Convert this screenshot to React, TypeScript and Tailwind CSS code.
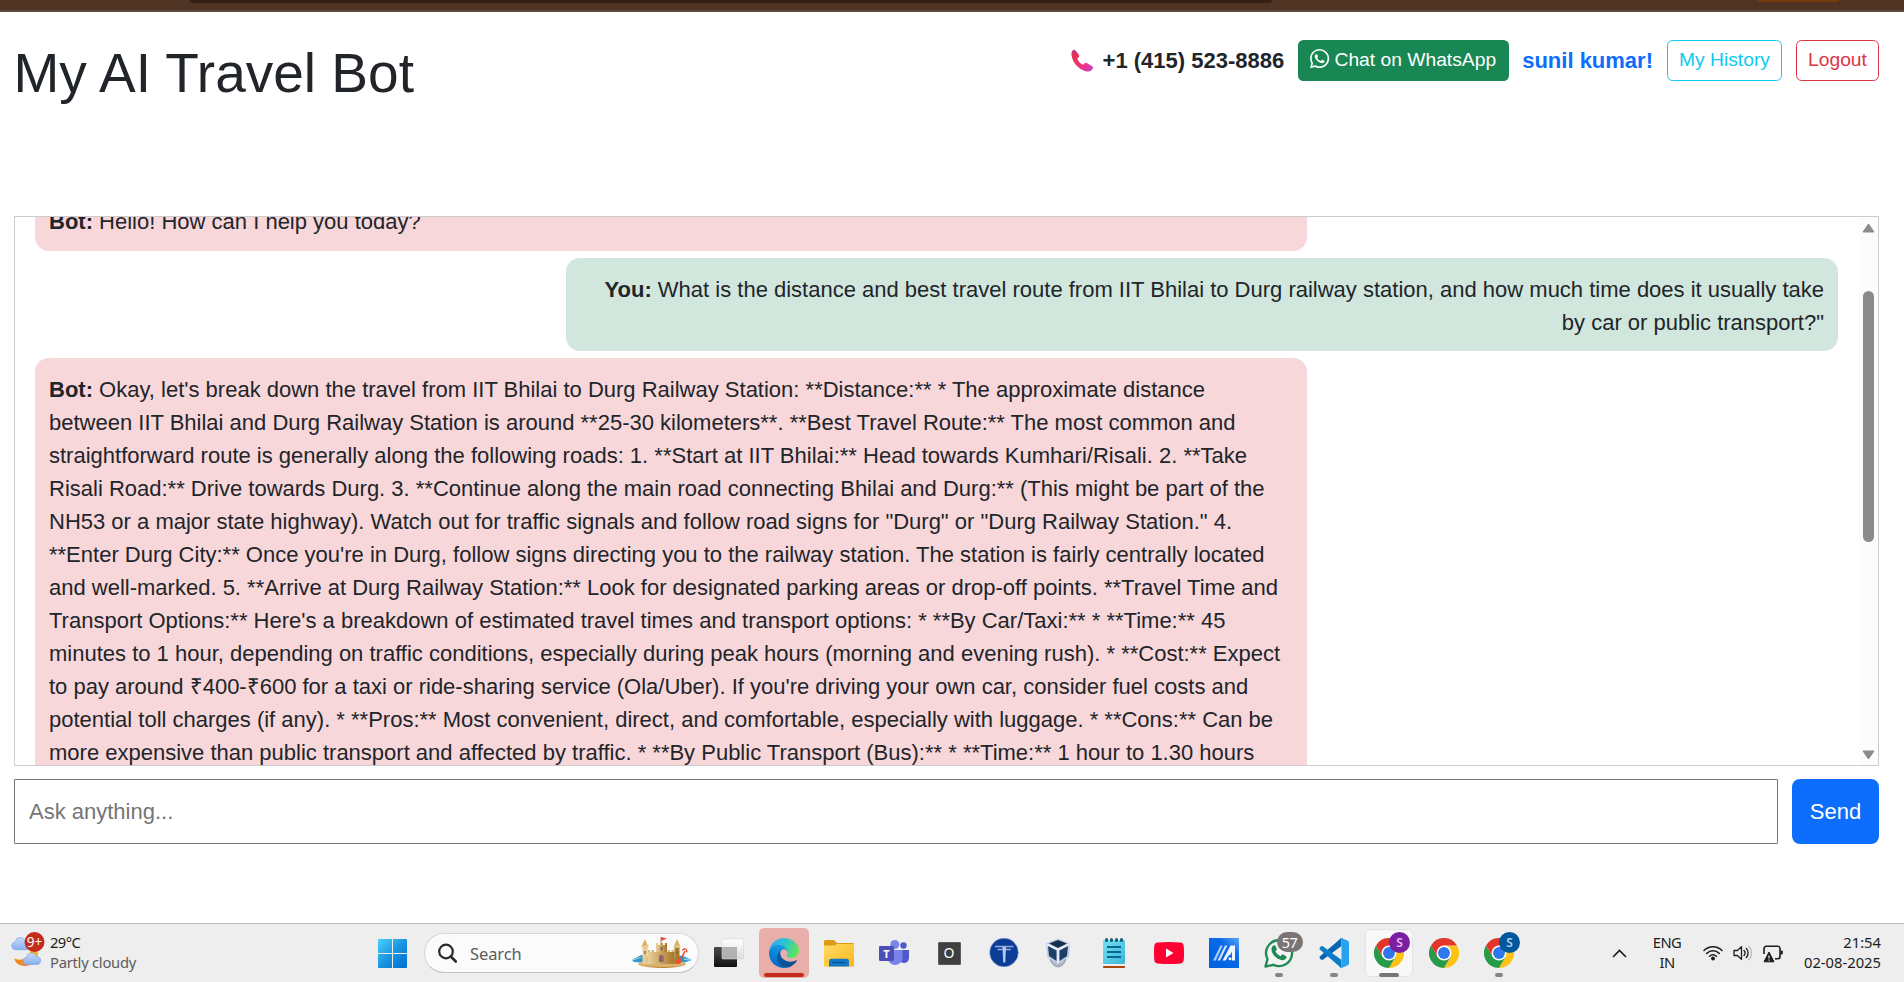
import React from "react";
import { BsWhatsapp } from "react-icons/bs";

const BOT_REPLY =
  "Okay, let's break down the travel from IIT Bhilai to Durg Railway Station: **Distance:** * The approximate distance between IIT Bhilai and Durg Railway Station is around **25-30 kilometers**. **Best Travel Route:** The most common and straightforward route is generally along the following roads: 1. **Start at IIT Bhilai:** Head towards Kumhari/Risali. 2. **Take Risali Road:** Drive towards Durg. 3. **Continue along the main road connecting Bhilai and Durg:** (This might be part of the NH53 or a major state highway). Watch out for traffic signals and follow road signs for \"Durg\" or \"Durg Railway Station.\" 4. **Enter Durg City:** Once you're in Durg, follow signs directing you to the railway station. The station is fairly centrally located and well-marked. 5. **Arrive at Durg Railway Station:** Look for designated parking areas or drop-off points. **Travel Time and Transport Options:** Here's a breakdown of estimated travel times and transport options: * **By Car/Taxi:** * **Time:** 45 minutes to 1 hour, depending on traffic conditions, especially during peak hours (morning and evening rush). * **Cost:** Expect to pay around ₹400-₹600 for a taxi or ride-sharing service (Ola/Uber). If you're driving your own car, consider fuel costs and potential toll charges (if any). * **Pros:** Most convenient, direct, and comfortable, especially with luggage. * **Cons:** Can be more expensive than public transport and affected by traffic. * **By Public Transport (Bus):** * **Time:** 1 hour to 1.30 hours";

function PhoneIcon() {
  return (
    <svg width="23" height="23" viewBox="0 0 23 23" className="mr-[9px] shrink-0">
      <defs>
        <linearGradient id="ph" x1="0" y1="0" x2="1" y2="1">
          <stop offset="0" stopColor="#b0409a" />
          <stop offset=".22" stopColor="#e8304f" />
          <stop offset=".65" stopColor="#f0328a" />
          <stop offset="1" stopColor="#b849c4" />
        </linearGradient>
      </defs>
      <path
        d="M1.6 1.4C2.6.4 3.8.5 4.6 1.5l3.2 4.3c.7 1 .6 1.900-.3 2.700l-1.200 1c.8 2.700 3 5 5.800 6.300l1.300-1.300c.8-.8 1.700-.9 2.700-.3l5 3c1 .7 1.200 1.700.5 2.700-1.400 2.200-4 3-7 2.300C7.500 20.600 1.500 13.500.600 6.500.300 4.300.500 2.500 1.600 1.400z"
        fill="url(#ph)"
      />
    </svg>
  );
}

function WeatherIcon() {
  return (
    <svg width="36" height="36" viewBox="0 0 36 36">
      <defs>
        <linearGradient id="moon" x1="0" y1="1" x2="1" y2="0">
          <stop offset="0" stopColor="#ee7a1c" />
          <stop offset="1" stopColor="#f9b928" />
        </linearGradient>
        <linearGradient id="cl" x1="0" y1="0" x2="0" y2="1">
          <stop offset="0" stopColor="#c9dcfa" />
          <stop offset="1" stopColor="#86aef0" />
        </linearGradient>
      </defs>
      <path d="M5 17.800a4 4 0 0 1 .2-7.900 5 5 0 0 1 9.800-.6 4.300 4.300 0 0 1 2 8.500z" fill="url(#cl)" stroke="#7fa4e2" strokeWidth=".7" />
      <path d="M20.500 18.500h7.500c.6 8.500-4.500 14.700-12 15.400C9.500 34.400 5.500 31 4 26.500c5.500 2.500 15 1.500 16.500-8z" fill="url(#moon)" />
      <path d="M16.500 32.500a3.500 3.500 0 0 1 0-7 5 5 0 0 1 9.800-.8 3.500 3.500 0 0 1 4.200 4.200c-.2 2.400-1.500 3.600-3.500 3.600z" fill="url(#cl)" stroke="#7fa4e2" strokeWidth=".7" />
      <circle cx="24.500" cy="10" r="10" fill="#c42b1c" />
      <text x="24.500" y="14.600" textAnchor="middle" fontSize="13.500" fill="#fff" fontFamily="Noto Sans, sans-serif">9+</text>
    </svg>
  );
}

function WindowsIcon() {
  return (
    <svg width="29" height="29" viewBox="0 0 29 29">
      <defs>
        <linearGradient id="win" gradientUnits="userSpaceOnUse" x1="0" y1="0" x2="29" y2="29">
          <stop offset="0" stopColor="#4cd2ff" />
          <stop offset=".5" stopColor="#1a94e0" />
          <stop offset="1" stopColor="#006fd0" />
        </linearGradient>
      </defs>
      <path d="M1 0h13v14H0V1a1 1 0 0 1 1-1zM15 0h13a1 1 0 0 1 1 1v13H15zM0 15h14v14H1a1 1 0 0 1-1-1zM15 15h14v13a1 1 0 0 1-1 1H15z" fill="url(#win)" />
    </svg>
  );
}

function CastleIcon() {
  return (
    <svg width="60" height="32" viewBox="0 0 60 32">
      <defs>
        <linearGradient id="sand" x1="0" y1="0" x2="1" y2="0">
          <stop offset="0" stopColor="#ecd09a" />
          <stop offset="1" stopColor="#a87624" />
        </linearGradient>
      </defs>
      <path d="M0 23l9-5 8 2v6L2 25zM43 18l8 1 9 4-9 3-9-1z" fill="#2f95cd" />
      <path d="M1 23l8-3M52 22l7 1" stroke="#86d2e8" strokeWidth="1.300" />
      <ellipse cx="30" cy="27" rx="24" ry="4" fill="#dcb271" />
      <path d="M10 28q20 4 41 0-19 6-41 0z" fill="#b88332" />
      <path d="M10.500 10h5v17h-5zM42.500 10h5v17h-5z" fill="url(#sand)" />
      <path d="M9.800 9L12.900 2 16 9zM42 9l3.100-7L48.200 9z" fill="#d9b06a" />
      <path d="M9.500 8.500h7v2.300h-7zM41.500 8.500h7v2.300h-7z" fill="#e7c98d" />
      <path d="M24 6h2v2h2V6h3v2h2V6h2v21H24z" fill="url(#sand)" />
      <path d="M15.500 15h27v12h-27z" fill="url(#sand)" />
      <path d="M16 13h2v2h-2zM19.500 13H22v2h-2.500zM35.500 13H38v2h-2.500zM39.500 13H42v2h-2.500z" fill="#dcb873" />
      <path d="M27 25v-5a2.300 2.300 0 0 1 4.600 0v5z" fill="#8d6670" />
      <path d="M28.500 10h2v3.500h-2zM12.300 14h1.300v3h-1.300zM44.500 14h1.300v3h-1.300z" fill="#806071" />
      <path d="M29 6V0" stroke="#9c6b42" strokeWidth=".8" />
      <path d="M29 0l6 1.500-3 1.200L29 4z" fill="#f04a32" />
      <path d="M53 14l-4.500 9" stroke="#e9492c" strokeWidth="1.600" />
      <path d="M50.500 13.500a2.200 2.200 0 1 1 4 1.800" stroke="#e9492c" strokeWidth="1.400" fill="none" />
      <path d="M45 21.500l5 1.500-1.500 3.500-5.500-.5z" fill="#f0502f" />
    </svg>
  );
}

function TaskViewIcon() {
  return (
    <svg width="30" height="30" viewBox="0 0 30 30">
      <defs>
        <linearGradient id="tv" x1="0" y1="0" x2="0" y2="1">
          <stop offset="0" stopColor="#4b4b4b" />
          <stop offset="1" stopColor="#101010" />
        </linearGradient>
        <linearGradient id="tw" x1="0" y1="0" x2="0" y2="1">
          <stop offset="0" stopColor="#fff" />
          <stop offset="1" stopColor="#dcdcdc" />
        </linearGradient>
      </defs>
      <rect x="0" y="9" width="23" height="20" rx="1" fill="url(#tv)" />
      <rect x="8" y="1" width="22" height="20" rx="1" fill="url(#tw)" />
      <path d="M8 9h15v12H8z" fill="#a4a4a4" opacity=".8" />
      <rect x="8" y="1" width="21.500" height="20" rx="1" fill="none" stroke="#d5d5d5" strokeWidth=".6" />
    </svg>
  );
}

function EdgeIcon() {
  return (
    <svg width="30" height="30" viewBox="0 0 256 256">
      <defs>
        <linearGradient id="e1" x1="0" y1="0" x2="1" y2="0">
          <stop offset="0" stopColor="#0c59a4" />
          <stop offset="1" stopColor="#114a8b" />
        </linearGradient>
        <linearGradient id="e2" x1=".6" y1="0" x2=".3" y2="1">
          <stop offset="0" stopColor="#1b9de2" />
          <stop offset=".5" stopColor="#0883d9" />
          <stop offset="1" stopColor="#0667c5" />
        </linearGradient>
        <linearGradient id="e3" x1="0" y1=".3" x2="1" y2=".6">
          <stop offset="0" stopColor="#35a8ef" />
          <stop offset=".45" stopColor="#2bc3d2" />
          <stop offset="1" stopColor="#66e551" />
        </linearGradient>
      </defs>
      <path fill="url(#e1)" d="M231 190.500c-3.400 1.800-6.900 3.400-10.500 4.700a101 101 0 0 1-35.900 6.500c-47.300 0-88.500-32.500-88.500-74.300 0-11.400 6.400-21.900 16.600-27.300-42.800 1.800-53.800 46.400-53.800 72.500 0 73.900 68.100 81.400 82.800 81.400 7.900 0 19.800-2.300 27-4.600l1.300-.4a128.300 128.300 0 0 0 66.600-52.800 4 4 0 0 0-5.600-5.700z" />
      <path fill="url(#e2)" d="M105.700 241.400a79.200 79.200 0 0 1-22.700-21.300 80.700 80.700 0 0 1 29.500-120c3.200-1.500 8.500-4.100 15.600-4a32.400 32.400 0 0 1 25.700 13 32 32 0 0 1 6.300 18.700c0-.2 24.500-79.600-80-79.600-43.900 0-80 41.700-80 78.200 0 19.300 4 38.500 12 56a128 128 0 0 0 156.400 67.100 75.500 75.500 0 0 1-62.800-8.100z" />
      <path fill="url(#e3)" d="M152.300 148.900c-.8 1-3.300 2.500-3.300 5.700 0 2.600 1.700 5.100 4.700 7.200 14.400 10 41.500 8.700 41.600 8.700a59.600 59.600 0 0 0 30.300-8.400A61.400 61.400 0 0 0 256 109.300c.3-22.400-8-37.300-11.300-43.900C223.500 23.900 177.700 0 128 0A128 128 0 0 0 0 126.200c.5-36.500 36.800-66 80-66 3.500 0 23.500.3 42 10 16.300 8.600 24.900 19 30.800 29.200 6.200 10.700 7.300 24.100 7.300 29.500 0 5.300-2.700 13.300-7.800 20z" />
    </svg>
  );
}

function FolderIcon() {
  return (
    <svg width="30" height="30" viewBox="0 0 30 30">
      <defs>
        <linearGradient id="fo" x1="0" y1="0" x2="1" y2="1">
          <stop offset="0" stopColor="#ffdc6c" />
          <stop offset="1" stopColor="#fab614" />
        </linearGradient>
      </defs>
      <path d="M0 3.500A1.500 1.500 0 0 1 1.500 2H10l3 3h16a1 1 0 0 1 1 1v3H0z" fill="#dc9b10" />
      <path d="M0 7.500h10.500L13 6h17v22.500H0z" fill="url(#fo)" />
      <path d="M5 28.500V23a2.300 2.300 0 0 1 2.300-2.300h15.400A2.300 2.300 0 0 1 25 23v5.500z" fill="#1277c9" />
      <path d="M8.500 24.500h13" stroke="#074c8c" strokeWidth="1.200" />
    </svg>
  );
}

function TeamsIcon() {
  return (
    <svg width="30" height="30" viewBox="0 0 30 30">
      <circle cx="24.500" cy="7.500" r="3.200" fill="#5059c9" />
      <path d="M20 12h10v8a5 5 0 0 1-8 4z" fill="#5059c9" />
      <circle cx="15.800" cy="6.500" r="4.500" fill="#7b83eb" />
      <path d="M9 12h14.500v8a7.300 7.300 0 0 1-14.500 1z" fill="#7b83eb" />
      <rect x="0" y="8" width="15" height="15" rx="1.200" fill="#4a50b5" />
      <text x="7.500" y="19.500" textAnchor="middle" fontSize="11" fontWeight="700" fill="#fff" fontFamily="Noto Sans, sans-serif">T</text>
    </svg>
  );
}

function RoundTIcon() {
  return (
    <svg width="30" height="30" viewBox="0 0 30 30">
      <circle cx="15" cy="14.500" r="14.300" fill="#0b3c96" stroke="#81a1d5" strokeWidth=".6" />
      <path d="M6 8.500h18.500M8.500 11.500H22" stroke="#8faada" strokeWidth="1.700" fill="none" />
      <path d="M13.500 9h3.500l-.7 15.500h-2.100z" fill="#b7c9e8" />
    </svg>
  );
}

function CubeIcon() {
  return (
    <svg width="30" height="30" viewBox="0 0 30 30">
      <path d="M6 21q2 7 8 8 6-1 8-8z" fill="#b4bbca" stroke="#75809a" strokeWidth=".7" />
      <path d="M14 .5L26 5.500 25 19 14 26 3 19 2 5.500z" fill="#c3cfe5" />
      <path d="M14 2l9 3.500L14 10 5 5.500z" fill="#14304f" />
      <path d="M4 8l8.500 4.500V23L5 18zM24 8l-8.500 4.500V23L23 18z" fill="#1d3f66" />
      <path d="M14 11v14M3 6.500l11 5 11-5" stroke="#eff4fb" strokeWidth="1.500" fill="none" />
    </svg>
  );
}

function NotepadIcon() {
  return (
    <svg width="22" height="30" viewBox="0 0 22 30">
      <defs>
        <linearGradient id="np" x1="0" y1="0" x2="1" y2="1">
          <stop offset="0" stopColor="#75dff2" />
          <stop offset="1" stopColor="#3cb7d7" />
        </linearGradient>
      </defs>
      <path d="M0 27h22v2a1 1 0 0 1-1 1H1a1 1 0 0 1-1-1z" fill="#a8480d" />
      <path d="M0 25h22v3H0z" fill="#f2efed" />
      <rect x="0" y="2" width="22" height="24" rx="1" fill="url(#np)" />
      <path d="M4 9h14M4 14h14M4 19h14" stroke="#08678f" strokeWidth="1.900" />
      <path d="M3.500 1.500v1M8.500 1.500v1M13.500 1.500v1M18.500 1.500v1" stroke="#155e78" strokeWidth="3" strokeLinecap="round" />
    </svg>
  );
}

function YoutubeIcon() {
  return (
    <svg width="30" height="22" viewBox="0 0 30 22">
      <path d="M3.500.6Q15-.5 26.500.6 29.300 1 29.700 4q.7 7 0 14-.4 3-3.200 3.400-11.500 1.100-23 0Q.7 21 .3 18q-.7-7 0-14Q.7 1 3.500.6z" fill="#ff0033" />
      <path d="M12 6.500v9l7.500-4.500z" fill="#fff" />
    </svg>
  );
}

function AsusIcon() {
  return (
    <svg width="30" height="30" viewBox="0 0 30 30">
      <defs>
        <linearGradient id="as" x1="1" y1="0" x2=".2" y2=".9">
          <stop offset="0" stopColor="#60a6f5" />
          <stop offset=".4" stopColor="#0b6ae6" />
          <stop offset="1" stopColor="#0062e0" />
        </linearGradient>
      </defs>
      <rect width="30" height="30" fill="url(#as)" />
      <path d="M4 22.500L11.500 7.500h2.300L6.800 22.500z" fill="#a4cbfa" />
      <path d="M8.500 22.500L16 7.500h2.300l-7.300 15z" fill="#d3e6fd" />
      <path d="M13.500 22.500L21.500 7.500H26v15h-3v-9l-1.500 3-2 1.300-2.800 4.700z" fill="#eef6ff" />
      <circle cx="21" cy="20.800" r="1.500" fill="#fff" />
    </svg>
  );
}

function WhatsappTaskIcon() {
  return (
    <svg width="30" height="30" viewBox="0 0 30 30" fill="none">
      <path d="M1.500 28.500l2-7.500A13 13 0 1 1 9.500 26.800z" stroke="#1f8a55" strokeWidth="2.400" strokeLinejoin="round" fill="#f3f4f3" />
      <path d="M9 7.800c1-1 2.200-.7 2.700.4l1 2.600c.3.900-.3 1.500-1.300 2.700 1.300 2.300 2.900 3.700 5.200 4.700 1-1.300 1.600-2 2.500-1.600l2.700 1.400c1 .6.9 1.700.2 2.600-1.500 1.900-4 2-6.800.7C10.500 19 7.800 15.500 7.500 12c-.1-1.700.4-3.200 1.500-4.200z" fill="#1f8a55" />
    </svg>
  );
}

function VscodeIcon() {
  return (
    <svg width="30" height="30" viewBox="0 0 30 30">
      <path d="M1 20.500q1.500 2.200 3.200 1L22.500 8V.5q-1 0-2 1L.8 18.500q-.8 1 .2 2z" fill="#0466b0" />
      <path d="M1 9.500q1.500-2.200 3.200-1L22.500 22v7.500q-1 0-2-1L.8 11.500q-.8-1 .2-2z" fill="#0a7cc8" />
      <path d="M20.500 29q1.300 1.400 3.200.6l5-2.400q1.300-.7 1.300-2V4.800q0-1.300-1.300-2L23.700.4q-1.900-.8-3.200.6 1.800-.2 2 1.500v25q-.2 1.700-2 1.500z" fill="#27a1f0" />
    </svg>
  );
}

function ChromeIcon() {
  return (
    <svg width="30" height="30" viewBox="0 0 48 48">
      <path d="M24 12h20.800A24 24 0 0 1 24 48l10.400-18z" fill="#fdc313" />
      <path d="M3.200 12l10.400 18L24 34.500 34.400 30 24 48A24 24 0 0 1 3.200 12z" fill="#289b48" />
      <path d="M3.200 12A24 24 0 0 1 44.800 12H24L13.600 30z" fill="#e3362b" />
      <circle cx="24" cy="24" r="12" fill="#fff" />
      <circle cx="24" cy="24" r="9.500" fill="#2f77ec" />
    </svg>
  );
}

function Slot({ children, mark }: { children: React.ReactNode; mark?: string }) {
  return (
    <div className="relative flex h-full w-[55px] items-center justify-center">
      {children}
      {mark && <span className={"absolute bottom-[5px] left-1/2 h-1 -translate-x-1/2 rounded-full " + mark} />}
    </div>
  );
}

function ProfileBadge({ tone }: { tone: string }) {
  return (
    <span className={"absolute left-[27.500px] top-[8px] flex size-[21px] items-center justify-center rounded-full text-[12px] font-semibold leading-none " + tone}>
      S
    </span>
  );
}

function Taskbar() {
  return (
    <footer className="flex h-[59px] shrink-0 items-center border-t border-[#bdbdbd] bg-[#eeeeee] font-['Noto_Sans',sans-serif] text-[14.750px] text-[#1c1c1c]">
      <div className="flex w-[378px] items-center pl-[10px]">
        <div className="mt-[-7px]"><WeatherIcon /></div>
        <div className="ml-1 mt-[-2px] whitespace-nowrap leading-5">
          <div className="tracking-[-0.600px]">29°C</div>
          <div className="text-[#5b5b5b] tracking-[-0.250px]">Partly cloudy</div>
        </div>
      </div>
      <WindowsIcon />
      <div className="ml-[17px] flex h-10 w-[275px] items-center rounded-full border border-[#d6d6d6] border-b-[#c2c2c2] bg-[#fbfbfb] pl-[13px] pr-[6px]">
        <svg width="19" height="20" viewBox="0 0 19 20" fill="none" stroke="#2a2a2a" strokeWidth="2.200">
          <circle cx="8" cy="8.500" r="6.800" />
          <path d="M12.800 13.500l5 5" strokeWidth="2.600" strokeLinecap="round" />
        </svg>
        <span className="ml-[13px] flex-1 text-[16.500px] text-[#5c5c5c] tracking-[-0.100px]">Search</span>
        <CastleIcon />
      </div>
      <div className="ml-[2.500px] flex h-full items-center">
        <Slot><TaskViewIcon /></Slot>
        <Slot mark="w-10 bg-[#c42b1c]">
          <div className="flex size-[50px] items-center justify-center rounded-[5px] bg-[#e9aeaa]"><EdgeIcon /></div>
        </Slot>
        <Slot><FolderIcon /></Slot>
        <Slot><TeamsIcon /></Slot>
        <Slot>
          <div className="flex size-[23px] items-center justify-center rounded-[1px] border border-[#5d5d5d] bg-[#3f3f3f] text-[14px] leading-none text-white">O</div>
        </Slot>
        <Slot><RoundTIcon /></Slot>
        <Slot><CubeIcon /></Slot>
        <Slot><NotepadIcon /></Slot>
        <Slot><YoutubeIcon /></Slot>
        <Slot><AsusIcon /></Slot>
        <Slot mark="w-2 bg-[#858585]">
          <WhatsappTaskIcon />
          <span className="absolute left-[25px] top-[8px] flex h-5 w-[26px] items-center justify-center rounded-full bg-[#7a7574] text-[14.500px] leading-none text-white tracking-[-0.500px]">57</span>
        </Slot>
        <Slot mark="w-2 bg-[#858585]"><VscodeIcon /></Slot>
        <Slot mark="w-5 bg-[#7a7574]">
          <div className="flex size-[48px] items-center justify-center rounded-[5px] border border-[#e3e3e3] bg-[#f8f8f8]"><ChromeIcon /></div>
          <ProfileBadge tone="bg-[#7b1fa2] text-[#e4bff0]" />
        </Slot>
        <Slot><ChromeIcon /></Slot>
        <Slot mark="w-2 bg-[#858585]">
          <ChromeIcon />
          <ProfileBadge tone="bg-[#01579b] text-[#a9d3f5]" />
        </Slot>
      </div>
      <div className="ml-auto flex items-center pr-[23px]">
        <svg width="15" height="9" viewBox="0 0 15 9" fill="none" stroke="#1c1c1c" strokeWidth="1.600">
          <path d="M1 8l6.500-6.500L14 8" />
        </svg>
        <div className="ml-[25px] mt-[-2px] w-[30px] text-center leading-5 tracking-[-0.600px]">ENG<br />IN</div>
        <svg width="20" height="16" viewBox="0 0 20 16" fill="none" stroke="#1c1c1c" strokeWidth="1.500" className="ml-[21px]" strokeLinecap="round">
          <path d="M1 5.500a12.500 12.500 0 0 1 18 0M3.800 8.400a8.700 8.700 0 0 1 12.400 0M6.600 11.200a4.800 4.800 0 0 1 6.800 0" />
          <circle cx="10" cy="13.500" r="1.200" fill="#1c1c1c" />
        </svg>
        <svg width="21" height="18" viewBox="0 0 21 18" fill="none" stroke="#1c1c1c" strokeWidth="1.300" className="ml-[10px]" strokeLinecap="round" strokeLinejoin="round">
          <path d="M1 6.500h3.300L8.500 2.700v12.600L4.300 11.500H1z" />
          <path d="M11 6.500a3.700 3.700 0 0 1 0 5M13.300 4.500a6.500 6.500 0 0 1 0 9" />
          <path d="M15.800 2.300a9.500 9.500 0 0 1 0 13.400" stroke="#bbb" />
        </svg>
        <svg width="21" height="18" viewBox="0 0 21 18" fill="none" stroke="#1c1c1c" strokeWidth="1.600" className="ml-[9px] mt-[2px]">
          <path d="M1 9V3.500a2.200 2.200 0 0 1 2.200-2.200h11.600A2.200 2.200 0 0 1 17 3.500v8a2.200 2.200 0 0 1-2.200 2.200H12" />
          <path d="M17.500 5.500h1.500a.8.8 0 0 1 .8.800v2.400a.8.8 0 0 1-.8.800h-1.500z" fill="#1c1c1c" stroke="none" />
          <path d="M6 7l5 9.800H1z" fill="#1c1c1c" strokeWidth="1" strokeLinejoin="round" />
          <path d="M6 10.500v3M6 14.500v1.200" stroke="#eee" strokeWidth="1.200" />
        </svg>
        <div className="ml-[20px] mt-[-3px] w-[77px] whitespace-nowrap text-right leading-5">21:54<br />02-08-2025</div>
      </div>
    </footer>
  );
}

function Bubble({ who, right, className, children }: { who: string; right?: boolean; className: string; children: React.ReactNode }) {
  return (
    <div
      className={
        "w-[1272px] shrink-0 rounded-[14px] px-[14px] pb-[12.750px] pt-[14.750px] " +
        (right ? "self-end bg-[#d1e7dd] text-right " : "self-start bg-[#f8d7da] ") +
        className
      }
    >
      <strong>{who}:</strong> {children}
    </div>
  );
}

export default function App() {
  return (
    <div className="flex h-[982px] w-[1904px] flex-col overflow-hidden bg-white font-['Liberation_Sans',Arial,sans-serif] text-[22px] leading-[33px] text-[#212529]">
      <div className="flex h-3 shrink-0 items-start border-b-2 border-[#5c4a40] bg-[#4f3424]">
        <div className="ml-[190px] h-[3px] w-[1082px] rounded-b-[8px] bg-[#331f13]" />
        <div className="ml-[485px] h-[2px] w-[82px] rounded-b-[4px] bg-[#743b0b]" />
      </div>
      <header className="flex h-[204px] shrink-0 items-start justify-between pl-[13.500px] pr-[25px] pt-7">
        <h1 className="text-[55px] leading-[66px]">My AI Travel Bot</h1>
        <div className="flex h-[41px] items-center whitespace-nowrap">
          <PhoneIcon />
          <strong className="mr-[14px]">+1 (415) 523-8886</strong>
          <button className="mr-[13px] flex h-[41px] w-[211px] items-center justify-center gap-[5px] rounded-[5.500px] bg-[#198754] pb-[2px] pr-[1px] text-[19.250px] text-white">
            <BsWhatsapp className="mt-[-2px] size-[19.250px] shrink-0" />
            Chat on WhatsApp
          </button>
          <strong className="mr-[14px] text-[#0d6efd]">sunil kumar!</strong>
          <button className="mr-[14px] h-[41px] w-[115px] rounded-[5.500px] border border-[#0dcaf0] pb-[2px] text-[19.250px] text-[#0dcaf0]">My History</button>
          <button className="h-[41px] w-[83px] rounded-[5.500px] border border-[#dc3545] pb-[2px] text-[19.250px] text-[#dc3545]">Logout</button>
        </div>
      </header>
      <main className="ml-[14px] flex h-[550px] w-[1865px] shrink-0 overflow-hidden border border-[#cccccc]">
        <div className="flex flex-1 flex-col gap-[6.750px] overflow-hidden px-5 pr-[21px]">
          <Bubble who="Bot" className="mt-[-26.500px]">Hello! How can I help you today?</Bubble>
          <Bubble who="You" right className="">
            What is the distance and best travel route from IIT Bhilai to Durg railway station, and how much time does it usually take by car or public transport?"
          </Bubble>
          <Bubble who="Bot" className="">{BOT_REPLY}</Bubble>
        </div>
        <div className="flex w-[19px] flex-col items-center bg-[#fcfcfc] pb-[5px] pt-[6px]">
          <svg width="13" height="10" viewBox="0 0 13 10"><path d="M6.500 1L12 9H1z" fill="#8b8b8b" stroke="#8b8b8b" strokeLinejoin="round" /></svg>
          <div className="mt-[58px] h-[251px] w-[11px] rounded-full bg-[#8b8b8b]" />
          <svg width="13" height="10" viewBox="0 0 13 10" className="mt-auto"><path d="M6.500 9L12 1H1z" fill="#8b8b8b" stroke="#8b8b8b" strokeLinejoin="round" /></svg>
        </div>
      </main>
      <form className="flex h-[157px] shrink-0 items-start gap-[14px] pl-[14px] pr-[25px] pt-[13px]">
        <input placeholder="Ask anything..." className="h-[65px] w-[1764px] rounded-[1px] border border-[#767676] px-[14px] placeholder:text-[#757575]" />
        <button type="button" className="h-[65px] w-[87px] rounded-[8px] bg-[#0d6efd] text-white">Send</button>
      </form>
      <Taskbar />
    </div>
  );
}
